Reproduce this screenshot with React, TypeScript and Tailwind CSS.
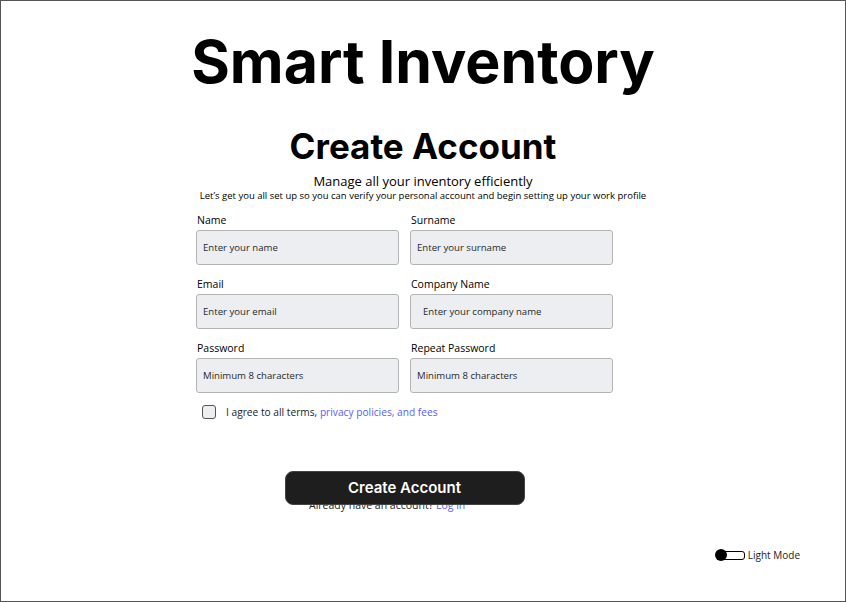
import { useState } from "react";

const body = { fontFamily: '"Open Sans", "Liberation Sans", sans-serif' };
const heading = { fontFamily: 'Inter, "Liberation Sans", sans-serif' };

function Field({ label, placeholder, type = "text", pad = "pl-[6px]" }: { label: string; placeholder: string; type?: string; pad?: string }) {
  return (
    <div className="flex flex-col">
      <label className="text-[10.5px] leading-[14px] font-medium text-black pl-[1px]">{label}</label>
      <input
        type={type}
        placeholder={placeholder}
        className={`mt-[3px] h-[35px] w-[203px] rounded-[3px] border border-[#b4b4b4] bg-[#eceef1] ${pad} text-[9.6px] text-[#222] placeholder:text-[#2a2a2a] outline-none`}
      />
    </div>
  );
}

export default function App() {
  const [agree, setAgree] = useState(false);
  const [light, setLight] = useState(true);

  return (
    <div className="h-[602px] w-[846px] border border-[#555] bg-white overflow-hidden flex flex-col text-black" style={body}>
      <h1 className="mt-[29px] text-center text-[59px] leading-[64px] font-bold" style={heading}>
        Smart Inventory
      </h1>
      <h2 className="mt-[31px] text-center text-[35px] leading-[42px] font-bold" style={heading}>
        Create Account
      </h2>
      <p className="mt-[6px] text-center text-[13px] leading-[16px] font-medium">Manage all your inventory efficiently</p>
      <p className="text-center text-[9.5px] leading-[14px] font-medium">
        Let’s get you all set up so you can verify your personal account and begin setting up your work profile
      </p>

      <div className="mt-[10px] w-[454px] mx-auto">
        <div className="grid grid-cols-[203px_203px] gap-x-[11px] gap-y-[12px]">
          <Field label="Name" placeholder="Enter your name" />
          <Field label="Surname" placeholder="Enter your surname" />
          <Field label="Email" placeholder="Enter your email" type="email" />
          <Field label="Company Name" placeholder="Enter your company name" pad="pl-[12px]" />
          <Field label="Password" placeholder="Minimum 8 characters" type="password" />
          <Field label="Repeat Password" placeholder="Minimum 8 characters" type="password" />
        </div>

        <div className="mt-[12px] flex items-center gap-[10px] pl-[6px] h-[14px]">
          <button
            onClick={() => setAgree(!agree)}
            className={`w-[14px] h-[14px] rounded-[3px] border border-[#555] ${agree ? "bg-[#5a5ef5]" : "bg-[#eceef1]"}`}
          />
          <span className="text-[10.2px] leading-[14px] text-[#222]">
            I agree to all terms, <a className="text-[#5a5ef5]">privacy policies, and fees</a>
          </span>
        </div>

        <div className="w-[417px] flex flex-col">
          <button
            className="relative z-10 mt-[52px] mx-auto w-[240px] h-[34px] rounded-[8px] border border-[#444] bg-[#1e1e1e] text-white text-[15px] font-semibold"
            style={heading}
          >
            Create Account
          </button>
          <p className="mt-[-7px] pl-[113px] text-[10.5px] leading-[14px] text-[#222]">
            Already have an account? <a className="text-[#5a5ef5]">Log in</a>
          </p>
        </div>
      </div>

      <div className="mt-[36px] flex justify-end pr-[45px]">
        <button onClick={() => setLight(!light)} className="flex items-center gap-[3px]">
          <span className="relative w-[30px] h-[12px]">
            <span className="absolute left-[4px] right-0 top-[1.5px] h-[9px] rounded-[3px] border border-black" />
            <span className={`absolute top-0 w-[12px] h-[12px] rounded-full bg-black ${light ? "left-0" : "right-0"}`} />
          </span>
          <span className="text-[10px] leading-[14px] text-[#222]">Light Mode</span>
        </button>
      </div>
    </div>
  );
}
